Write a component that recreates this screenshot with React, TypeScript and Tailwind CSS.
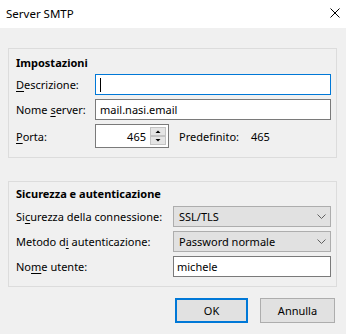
export default function App() {
  const font = "font-['Noto_Sans','Open_Sans',sans-serif]";
  return (
    <div className={`w-[346px] h-[334px] bg-[#f0f0f0] text-black text-[11px] leading-[15px] overflow-hidden ${font}`}>
      {/* Title bar */}
      <div className="h-[28px] bg-white flex items-start justify-between pl-[6px] pr-[6px]">
        <span className="mt-[6px] text-[11.5px]">Server SMTP</span>
        <svg width="10" height="10" viewBox="0 0 10 10" className="mt-[8px]">
          <path d="M0.5 0.5 L9.5 9.5 M9.5 0.5 L0.5 9.5" stroke="#000" strokeWidth="1" fill="none" />
        </svg>
      </div>

      {/* Group 1 */}
      <div className="ml-[8px] mt-[20px] w-[329px] h-[110px] border border-[#dcdcdc] pl-[7px] pt-[6px]">
        <div className="font-bold">Impostazioni</div>
        <div className="mt-[4px] flex flex-col gap-[4px]">
          <div className="flex items-center h-[21px]">
            <div className="w-[79px]">
              <u className="underline-offset-2">D</u>escrizione:
            </div>
            <div className="w-[236px] h-[21px] border border-[#0078d7] bg-white flex items-center pl-[4px]">
              <div className="w-px h-[14px] bg-black" />
            </div>
          </div>
          <div className="flex items-center h-[21px]">
            <div className="w-[79px]">
              Nome <u className="underline-offset-2">s</u>erver:
            </div>
            <div className="w-[236px] h-[21px] border border-[#7a7a7a] bg-white flex items-center pl-[4px]">
              mail.nasi.email
            </div>
          </div>
          <div className="flex items-center h-[24px]">
            <div className="w-[79px]">
              <u className="underline-offset-2">P</u>orta:
            </div>
            <div className="w-[74px] h-[24px] border border-[#7a7a7a] bg-white flex items-center justify-end pr-[2px]">
              <span className="mr-[4px]">465</span>
              <svg width="16" height="18" viewBox="0 0 16 18">
                <rect x="0.5" y="0.5" width="15" height="8" fill="#e5e5e5" stroke="#c4c4c4" />
                <rect x="0.5" y="9.5" width="15" height="8" fill="#e5e5e5" stroke="#c4c4c4" />
                <path d="M5.5 6 L8 3.5 L10.5 6 Z" fill="#000" />
                <path d="M5.5 12 L8 14.5 L10.5 12 Z" fill="#000" />
              </svg>
            </div>
            <div className="ml-[10px] w-[72px]">Predefinito:</div>
            <div>465</div>
          </div>
        </div>
      </div>

      {/* Group 2 */}
      <div className="ml-[8px] mt-[23px] w-[329px] h-[106px] border border-[#dcdcdc] pl-[7px] pt-[4px]">
        <div className="font-bold">Sicurezza e autenticazione</div>
        <div className="mt-[5px] flex flex-col gap-[4px]">
          <div className="flex items-center h-[21px]">
            <div className="w-[157px]">
              Si<u className="underline-offset-2">c</u>urezza della connessione:
            </div>
            <div className="w-[158px] h-[21px] border border-[#adadad] bg-[#e1e1e1] flex items-center justify-between pl-[5px] pr-[4px]">
              <span>SSL/TLS</span>
              <svg width="9" height="5" viewBox="0 0 9 5">
                <path d="M0.5 0.5 L4.5 4.5 L8.5 0.5" stroke="#606060" strokeWidth="1" fill="none" />
              </svg>
            </div>
          </div>
          <div className="flex items-center h-[21px]">
            <div className="w-[157px]">
              Metodo d<u className="underline-offset-2">i</u> autenticazione:
            </div>
            <div className="w-[158px] h-[21px] border border-[#adadad] bg-[#e1e1e1] flex items-center justify-between pl-[5px] pr-[4px]">
              <span>Password normale</span>
              <svg width="9" height="5" viewBox="0 0 9 5">
                <path d="M0.5 0.5 L4.5 4.5 L8.5 0.5" stroke="#606060" strokeWidth="1" fill="none" />
              </svg>
            </div>
          </div>
          <div className="flex items-center h-[21px]">
            <div className="w-[157px]">
              No<u className="underline-offset-2">m</u>e utente:
            </div>
            <div className="w-[158px] h-[21px] border border-[#7a7a7a] bg-white flex items-center pl-[3px]">
              michele
            </div>
          </div>
        </div>
      </div>

      {/* Buttons */}
      <div className="mt-[11px] flex justify-end gap-[12px] pr-[11px]">
        <button className="w-[73px] h-[25px] border-2 border-[#0078d7] bg-[#e1e1e1] flex items-center justify-center">
          OK
        </button>
        <button className="w-[75px] h-[25px] border border-[#adadad] bg-[#e1e1e1] flex items-center justify-center">
          Annulla
        </button>
      </div>
    </div>
  );
}
